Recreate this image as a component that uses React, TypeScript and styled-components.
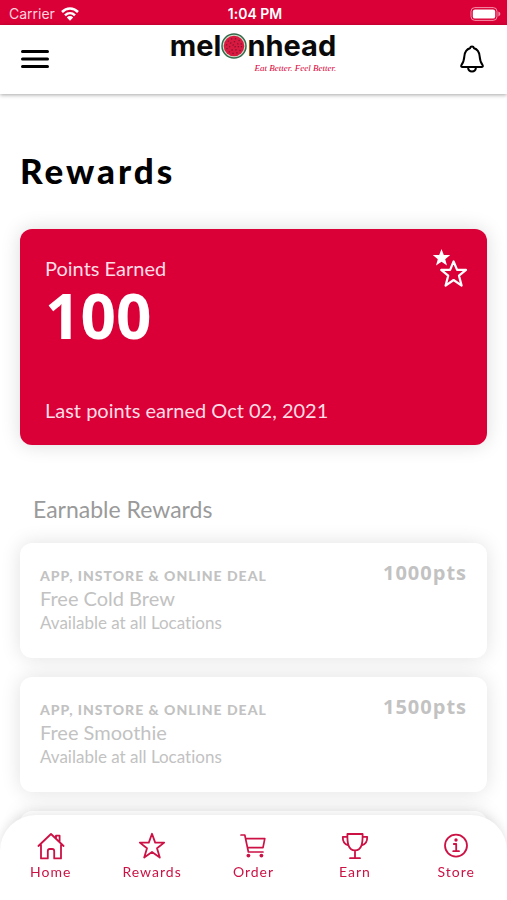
import React from "react";
import styled, { createGlobalStyle } from "styled-components";

const RED = "#da0037";

const GlobalStyle = createGlobalStyle`
  * { box-sizing: border-box; }
  body { margin: 0; background: #fff; font-family: Lato, "Open Sans", sans-serif; font-variant-ligatures: none; }
  button { border: 0; padding: 0; background: none; color: inherit; font: inherit; cursor: pointer; }
  h1, h2, h3, p, ul { margin: 0; padding: 0; }
  svg { display: block; }
`;

const Screen = styled.div`
  display: flex;
  flex-direction: column;
  height: 100vh;
  overflow: hidden;
`;

const StatusBar = styled.div`
  display: grid;
  grid-template-columns: 1fr auto 1fr;
  align-items: center;
  flex: none;
  height: 25px;
  padding: 2px 6px 0 9px;
  background: ${RED};
  color: #fff;
  font-family: Inter, sans-serif;
  font-size: 14px;
`;

const Carrier = styled.div`
  display: flex;
  align-items: center;
  gap: 6px;
  color: #ffd3de;
`;

const Clock = styled.div`
  font-weight: 600;
`;

const Battery = styled.div`
  justify-self: end;
`;

const Header = styled.header`
  display: grid;
  grid-template-columns: 1fr auto 1fr;
  align-items: center;
  flex: none;
  height: 69px;
  padding: 0 22px 2px 21px;
  background: #fff;
  box-shadow: 0 1px 4px rgba(0, 0, 0, 0.35);
  z-index: 1;
`;

const IconButton = styled.button<{ $end?: boolean }>`
  justify-self: ${(p) => (p.$end ? "end" : "start")};
`;

const Brand = styled.a`
  display: flex;
  flex-direction: column;
  align-items: flex-end;
  padding-bottom: 12px;
  color: #0a0a0a;
  text-decoration: none;
`;

const Wordmark = styled.span`
  display: flex;
  align-items: center;
  font-family: Inter, sans-serif;
  font-size: 29px;
  font-weight: 700;
  line-height: 30px;
`;

const Tagline = styled.span`
  color: ${RED};
  font-family: "Liberation Serif", serif;
  font-size: 9px;
  font-style: italic;
  line-height: 14px;
`;

const Main = styled.main`
  flex: 1;
  min-height: 0;
  overflow-y: auto;
  scrollbar-width: none;
  padding: 52px 20px 100px;
`;

const Title = styled.h1`
  font-size: 35px;
  font-weight: 900;
  line-height: 48px;
  letter-spacing: 3px;
`;

const PointsCard = styled.section`
  display: flex;
  justify-content: space-between;
  min-height: 216px;
  margin-top: 35px;
  padding: 20px 19px 21px 25px;
  border-radius: 12px;
  background: ${RED};
  color: #fff;
  box-shadow: 0 0 20px rgba(0, 0, 0, 0.14);
`;

const PointsBody = styled.div`
  display: flex;
  flex-direction: column;
`;

const PointsHeading = styled.h2`
  padding-top: 5px;
  color: #ffdce5;
  font-size: 20px;
  font-weight: 400;
  line-height: 28px;
`;

const PointsValue = styled.strong`
  font-family: "Open Sans", sans-serif;
  font-size: 62px;
  font-weight: 700;
  line-height: 66px;
`;

const PointsNote = styled.p`
  margin-top: auto;
  color: #ffdce5;
  font-size: 20px;
  line-height: 28px;
`;

const SectionTitle = styled.h2`
  margin: 48px 13px 0;
  color: #9a9a9a;
  font-size: 23px;
  font-weight: 400;
  line-height: 32px;
`;

const RewardList = styled.ul`
  display: grid;
  gap: 19px;
  margin-top: 18px;
  list-style: none;
`;

const RewardCard = styled.li`
  display: flex;
  justify-content: space-between;
  min-height: 115px;
  padding: 20px;
  border-radius: 12px;
  background: #fff;
  color: #c2c2c2;
  box-shadow: 0 0 20px rgba(0, 0, 0, 0.12);
`;

const Channel = styled.p`
  padding-top: 3px;
  font-size: 14px;
  font-weight: 900;
  line-height: 20px;
  letter-spacing: 1px;
`;

const RewardName = styled.h3`
  font-size: 20px;
  font-weight: 400;
  line-height: 24px;
`;

const Availability = styled.p`
  font-size: 17px;
  line-height: 26px;
`;

const Cost = styled.strong`
  font-family: "Open Sans", sans-serif;
  font-size: 20px;
  font-weight: 700;
  line-height: 20px;
  letter-spacing: 1px;
`;

const TabBar = styled.nav`
  position: fixed;
  right: 0;
  bottom: 0;
  left: 0;
  z-index: 2;
  display: grid;
  grid-template-columns: repeat(5, 1fr);
  height: 85px;
  padding-top: 17px;
  border-radius: 36px 36px 0 0;
  background: #fff;
  box-shadow: 0 0 12px rgba(0, 0, 0, 0.12);
`;

const Tab = styled.a`
  display: flex;
  flex-direction: column;
  align-items: center;
  gap: 2px;
  color: #cc1245;
  font-size: 14px;
  line-height: 20px;
  letter-spacing: 1px;
  text-decoration: none;
`;

const Melon = () => (
  <svg width="26" height="28" viewBox="0 0 26 28" aria-hidden="true">
    <circle cx="13" cy="14" r="12" fill="#cfe0cc" stroke="#35694a" strokeWidth="1.5" />
    <circle cx="13" cy="14" r="10.3" fill="#d91a40" />
    <g fill="none" stroke="#8d1230" strokeWidth="1.3" strokeDasharray="1.4 2.6">
      <circle cx="13" cy="14" r="7.5" />
      <circle cx="13" cy="14" r="4.4" />
      <circle cx="13" cy="14" r="1.3" />
    </g>
  </svg>
);

const line = { fill: "none", stroke: "currentColor", strokeLinejoin: "round", strokeLinecap: "round" } as const;

const HomeIcon = () => (
  <svg width="28" height="28" viewBox="0 0 28 28" {...line} strokeWidth="1.8">
    <path d="M1.4 14 14 2 26.6 14M4 12.5V26.4H10.8V19q0-2 2-2h2.4q2 0 2 2V26.4H24V12.5M19 6.6V3.6H22.6V10" />
  </svg>
);
const StarIcon = () => (
  <svg width="28" height="28" viewBox="0 0 28 28" {...line} strokeWidth="1.8">
    <path d="M14 1.8 17.2 10.6H26.2L19 16.2 21.8 25.6 14 20 6.2 25.6 9 16.2 1.8 10.6H10.8Z" />
  </svg>
);
const CartIcon = () => (
  <svg width="28" height="28" viewBox="0 0 28 28" {...line} strokeWidth="1.7">
    <path d="M2 3H5.8L9.4 20H24M6.6 6.6H25.8L24 15.7H8.6" />
    <circle cx="9.4" cy="23.6" r="1.9" fill="currentColor" stroke="none" />
    <circle cx="22.4" cy="23.6" r="1.9" fill="currentColor" stroke="none" />
  </svg>
);
const TrophyIcon = () => (
  <svg width="28" height="28" viewBox="0 0 28 28" {...line} strokeWidth="1.8">
    <path d="M6.4 2H21.6C21.8 11 20.8 18.4 14 18.4S6.2 11 6.4 2ZM14 18.4V26M9 26.2H19M6.4 4.8H1.8C1.6 9 3.4 12.4 7.4 13.4M21.6 4.8H26.2C26.4 9 24.6 12.4 20.6 13.4" />
  </svg>
);
const InfoIcon = () => (
  <svg width="28" height="28" viewBox="0 0 28 28" {...line} strokeWidth="1.8">
    <circle cx="14" cy="13.6" r="11" />
    <path d="M11.8 12H14.2V19M11.2 19.2H17" />
    <circle cx="14" cy="8" r="1.7" fill="currentColor" stroke="none" />
  </svg>
);

const tabs = [
  { label: "Home", Icon: HomeIcon },
  { label: "Rewards", Icon: StarIcon },
  { label: "Order", Icon: CartIcon },
  { label: "Earn", Icon: TrophyIcon },
  { label: "Store", Icon: InfoIcon },
];

const rewards = [
  { name: "Free Cold Brew", cost: 1000 },
  { name: "Free Smoothie", cost: 1500 },
];

export default function App() {
  return (
    <Screen>
      <GlobalStyle />
      <StatusBar>
        <Carrier>
          Carrier
          <svg width="18" height="14" viewBox="0 0 18 14" fill="none" stroke="#fff" strokeWidth="2.5">
            <path d="M1 5C5.6.4 12.4.4 17 5M4 8.4C6.9 5.6 11.1 5.6 14 8.4" />
            <path d="M5.8 10.4C7.6 8.6 10.4 8.6 12.2 10.4L9 13.7Z" fill="#fff" stroke="none" />
          </svg>
        </Carrier>
        <Clock>1:04 PM</Clock>
        <Battery>
          <svg width="31" height="14" viewBox="0 0 31 14">
            <rect x="1" y=".6" width="26" height="12.8" rx="3.8" fill="none" stroke="#f592ab" />
            <rect x="2.8" y="2.4" width="22.4" height="9.2" rx="2.2" fill="#fff" />
            <path d="M28.4 4.6Q30.4 5.6 30.4 7T28.4 9.4Z" fill="#f592ab" />
          </svg>
        </Battery>
      </StatusBar>
      <Header>
        <IconButton aria-label="Menu">
          <svg width="28" height="20" viewBox="0 0 28 20" stroke="#000" strokeWidth="3" strokeLinecap="round">
            <path d="M1.5 2.5H26.5M1.5 10H26.5M1.5 17.5H26.5" />
          </svg>
        </IconButton>
        <Brand href="#" aria-label="melonhead">
          <Wordmark>mel<Melon />nhead</Wordmark>
          <Tagline>Eat Better. Feel Better.</Tagline>
        </Brand>
        <IconButton $end aria-label="Notifications">
          <svg width="26" height="28" viewBox="0 0 26 28" fill="none" stroke="#000" strokeWidth="2" strokeLinejoin="round">
            <path d="M13 1.6c-1.2 0-1.8.7-2 1.6C7.4 4.2 5.8 7.2 5.4 11c-.4 5-1 6.6-3 9.2-.7 1 0 1.8 1 1.8h19.2c1 0 1.7-.8 1-1.8-2-2.6-2.6-4.2-3-9.2-.4-3.8-2-6.8-5.6-7.8-.2-.9-.8-1.6-2-1.6Z" />
            <path d="M9 22.3c.3 2.8 1.900 4.200 4 4.200s3.700-1.400 4-4.200" />
          </svg>
        </IconButton>
      </Header>
      <Main>
        <Title>Rewards</Title>
        <PointsCard>
          <PointsBody>
            <PointsHeading>Points Earned</PointsHeading>
            <PointsValue>100</PointsValue>
            <PointsNote>Last points earned Oct 02, 2021</PointsNote>
          </PointsBody>
          <svg width="36" height="40" viewBox="0 0 36 40" aria-hidden="true">
            <path d="M9.5 0 11.8 6H18.2L13.2 10.2 15 16.5 9.5 12.8 4 16.5 5.8 10.2.8 6H7.2Z" fill="#fff" />
            <path d="M21.6 12.5 25.1 20.9H34L27 26.7 29.6 36.6 21.6 31 13.6 36.6 16.2 26.7 9.2 20.9H18.1Z" fill={RED} stroke="#fff" strokeWidth="2.2" strokeLinejoin="round" />
          </svg>
        </PointsCard>
        <SectionTitle>Earnable Rewards</SectionTitle>
        <RewardList>
          {rewards.map((r) => (
            <RewardCard key={r.name}>
              <div>
                <Channel>APP, INSTORE &amp; ONLINE DEAL</Channel>
                <RewardName>{r.name}</RewardName>
                <Availability>Available at all Locations</Availability>
              </div>
              <Cost>{r.cost}pts</Cost>
            </RewardCard>
          ))}
          <RewardCard aria-hidden="true" />
        </RewardList>
      </Main>
      <TabBar aria-label="Main">
        {tabs.map(({ label, Icon }) => (
          <Tab key={label} href="#">
            <Icon />
            {label}
          </Tab>
        ))}
      </TabBar>
    </Screen>
  );
}
